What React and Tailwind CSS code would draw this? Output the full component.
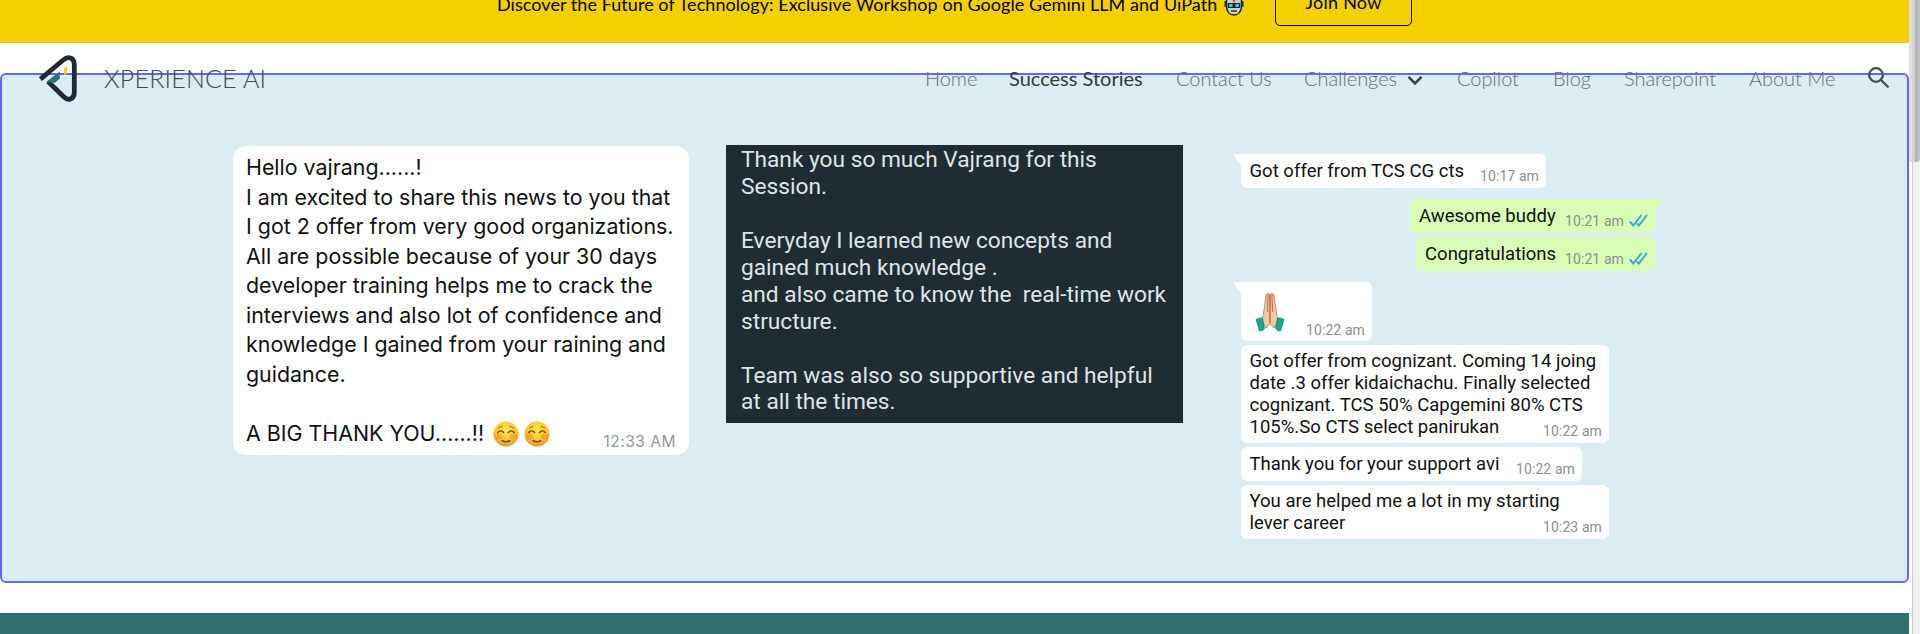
const NAV = [
  { label: 'Home', cell: 'w-[84px]' },
  { label: 'Success Stories', cell: 'w-[167px]', active: true },
  { label: 'Contact Us', cell: 'w-[128px]' },
  { label: 'Challenges', cell: 'w-[153px]', menu: true },
  { label: 'Copilot', cell: 'w-[96px]' },
  { label: 'Blog', cell: 'w-[71px]' },
  { label: 'Sharepoint', cell: 'w-[125px]' },
  { label: 'About Me', cell: 'w-[118px]' },
];

const LETTER = [
  'Hello vajrang......!',
  'I am excited to share this news to you that',
  'I got 2 offer from very good organizations.',
  'All are possible because of your 30 days',
  'developer training helps me to crack the',
  'interviews and also lot of confidence and',
  'knowledge I gained from your raining and',
  'guidance.',
];

const NOTE = [
  'Thank you so much Vajrang for this',
  'Session.',
  '',
  'Everyday I learned new concepts and',
  'gained much knowledge .',
  'and also came to know the  real-time work',
  'structure.',
  '',
  'Team was also so supportive and helpful',
  'at all the times.',
];

function Robot() {
  return (
    <svg className="ml-[7px] h-[24px] w-[20px] shrink-0" viewBox="0 0 20 24">
      <path d="M.5 9h2v6h-2zM17.500 9h2v6h-2z" fill="#333" />
      <path d="M2.5 4Q10 0 17.500 4v11q-1 8-7.500 8T2.500 15z" fill="#c9cdd0" stroke="#222" strokeWidth="1.500" />
      <path d="M8.200 7.500h3.600l-1.800 3z" fill="#e8302a" />
      <rect x="3.800" y="11" width="12.400" height="5" fill="#222" />
      <rect x="5" y="12" width="3.600" height="3" fill="#2cc3f2" />
      <rect x="11.400" y="12" width="3.600" height="3" fill="#2cc3f2" />
      <path d="M7 19h6" stroke="#333" strokeWidth="1.500" />
    </svg>
  );
}

function Logo() {
  return (
    <svg className="h-[50px] w-[42px]" viewBox="0 0 42 50" fill="none">
      <path d="M2.400 26.200L25.500 6.800C30 2.800 36.300 4.500 36.300 11.500V39.500C36.300 46.500 30 48 26 44L10 28.500" stroke="#1f2a36" strokeWidth="4.800" />
      <path d="M8.200 29L21.800 18.500V25.500L17 29.800z" fill="#31706f" />
      <path d="M26 15.500L29 13V20.500L26 22z" fill="#f5cf00" />
    </svg>
  );
}

function Smile() {
  return (
    <svg className="h-[26px] w-[26px]" viewBox="0 0 27 27" fill="none">
      <defs>
        <radialGradient id="face" cx=".5" cy=".35" r=".65">
          <stop offset="0" stopColor="#ffe94f" />
          <stop offset=".65" stopColor="#fdc52e" />
          <stop offset="1" stopColor="#ee8e1b" />
        </radialGradient>
      </defs>
      <circle cx="13.500" cy="13.500" r="13" fill="url(#face)" />
      <ellipse cx="5.800" cy="16" rx="4" ry="3" fill="#f8793a" opacity=".4" />
      <ellipse cx="21.200" cy="16" rx="4" ry="3" fill="#f8793a" opacity=".4" />
      <path d="M5 12q3-3.500 6 0M16 12q3-3.500 6 0M9.500 20.300q4 2.700 8 0" stroke="#70420d" strokeWidth="1.500" strokeLinecap="round" />
      <path d="M5.500 7.300q2-1.800 4-1.500M21.500 7.300q-2-1.800-4-1.500" stroke="#9a6412" strokeWidth="1" strokeLinecap="round" />
    </svg>
  );
}

function Hands() {
  return (
    <svg className="h-[40px] w-[30px]" viewBox="0 0 30 40">
      <path d="M14.800 2.500Q12.500.5 11 3L9.200 17Q8.500 24 6.500 27.500L11 36L15 31.500z" fill="#f3c9a5" stroke="#b87856" strokeWidth=".8" />
      <path d="M15.200 2.500Q17.500.5 19 3L20.800 17Q21.500 24 23.500 27.500L19 36L15 31.500z" fill="#f3c9a5" stroke="#b87856" strokeWidth=".8" />
      <path d="M13 4L12.500 20M17 4L17.500 20M15 3V31" stroke="#b06e50" strokeWidth="1" fill="none" />
      <path d="M12 1.500h2v5h-2.500zM16 1.500h2l.5 5H16z" fill="#d79874" />
      <path d="M1 27.500Q4 25.500 7.500 26L9.500 36.500Q7 39.500 4.500 39Z" fill="#16a990" stroke="#0d7d68" strokeWidth=".7" />
      <path d="M29 27.500Q26 25.500 22.500 26L20.500 36.500Q23 39.500 25.500 39Z" fill="#16a990" stroke="#0d7d68" strokeWidth=".7" />
    </svg>
  );
}

function Ticks() {
  return (
    <svg className="mb-[2px] ml-[5px] h-[13px] w-[19px]" viewBox="0 0 19 13" fill="none" stroke="#36a8dc" strokeWidth="1.900">
      <path d="M.8 7.500L4.300 11.500L12.500 1M7.800 9.500L9.800 11.500L18 1" />
    </svg>
  );
}

function Time({ children }) {
  return <span className="text-[14px] leading-[16px] tracking-[0.1px] text-[#8c8f91]">{children}</span>;
}

function Tail({ right }) {
  return right ? (
    <svg className="absolute top-0 -right-[8px] h-[12px] w-[16px]" viewBox="0 0 16 12"><path d="M0 0h15q1.500.5 0 2L8 11H0z" fill="#d9fdb5" /></svg>
  ) : (
    <svg className="absolute top-0 -left-[8px] h-[12px] w-[16px]" viewBox="0 0 16 12"><path d="M16 0H1q-1.500.5 0 2L8 11h8z" fill="#fff" /></svg>
  );
}

function Bubble({ className, lines, time, sent, tail }) {
  return (
    <div className={`relative flex items-end justify-between rounded-[6px] ${sent ? 'bg-[#d9fdb5] pr-[7px] pl-[9px]' : 'bg-white pr-[7px] pl-[8.500px]'} ${className}`}>
      {tail && <Tail right={sent} />}
      <div className={`min-w-0 self-start text-[18.500px] leading-[22px] tracking-[0.020px] whitespace-pre text-[#111] ${lines.length > 1 ? 'pt-[5px]' : 'pt-[6px]'}`}>
        {lines.map((l) => <div key={l}>{l}</div>)}
      </div>
      <div className="flex shrink-0 items-end pb-[4px]">
        <Time>{time}</Time>
        {sent && <Ticks />}
      </div>
    </div>
  );
}

export default function App() {
  return (
    <div className="relative flex h-[634px] w-[1920px] overflow-hidden bg-white font-['Lato',sans-serif]">
      <main className="flex w-[1909px] flex-col">
        <div className="flex h-[43px] items-start overflow-hidden bg-[#f5d000] pl-[497px] text-black">
          <div className="-mt-[8px] flex h-[24px] w-[778px] items-center text-[18px] leading-[24px] tracking-[0.055px] whitespace-nowrap">
            <span>Discover the Future of Technology: Exclusive Workshop on Google Gemini LLM and UiPath</span>
            <Robot />
          </div>
          <button className="-mt-[22px] h-[48px] w-[137px] rounded-[5px] border border-black text-[18px] leading-[24px] tracking-[0.250px]">Join Now</button>
        </div>

        <section className="mt-[30px] flex h-[510px] shrink-0 items-start rounded-[6px] border-2 border-[#6464ff] bg-[#dcecf3] pl-[231px]">
          <article className="mt-[71px] h-[309px] w-[456px] rounded-[13px] bg-white pt-[7px] pr-[13px] pl-[13px] font-['Inter',sans-serif] text-[21.400px] leading-[29.560px] whitespace-pre text-[#111]">
            {LETTER.map((l) => <div key={l}>{l}</div>)}
            <div className="h-[29.560px]" />
            <div className="flex h-[29px] items-center">
              <span>A BIG THANK YOU......!!</span>
              <span className="ml-[9px] flex gap-[5px]"><Smile /><Smile /></span>
              <span className="mt-[17px] ml-auto text-[15.500px] leading-[20px] tracking-[0.500px] text-[#98989c]">12:33 AM</span>
            </div>
          </article>

          <article className="mt-[70px] ml-[37px] h-[278px] w-[457px] bg-[#202c33] pt-[2px] pl-[15px] font-['Roboto',sans-serif] text-[22.700px] leading-[26.940px] whitespace-pre text-[#dfe4e7]">
            {NOTE.map((l, i) => <div key={i} className="h-[26.940px]">{l}</div>)}
          </article>

          <div className="mt-[79px] ml-[58px] flex w-[414px] flex-col items-start font-['Roboto',sans-serif]">
            <Bubble className="h-[34px] w-[305px]" lines={['Got offer from TCS CG cts']} time="10:17 am" tail />
            <Bubble className="mt-[11px] h-[34px] w-[245px] self-end" lines={['Awesome buddy']} time="10:21 am" sent tail />
            <Bubble className="mt-[4px] h-[34px] w-[239px] self-end" lines={['Congratulations']} time="10:21 am" sent />
            <div className="relative mt-[11px] flex h-[59px] w-[131px] items-end justify-between rounded-[6px] bg-white pr-[7px] pb-[3px] pl-[14px]">
              <Tail />
              <span className="mb-[6px]"><Hands /></span>
              <Time>10:22 am</Time>
            </div>
            <Bubble className="mt-[4px] h-[98px] w-[368px]" lines={['Got offer from cognizant. Coming 14 joing', 'date .3 offer kidaichachu. Finally selected', 'cognizant. TCS 50% Capgemini 80% CTS', '105%.So CTS select panirukan']} time="10:22 am" />
            <Bubble className="mt-[4px] h-[34px] w-[341px]" lines={['Thank you for your support avi']} time="10:22 am" />
            <Bubble className="mt-[4px] h-[54px] w-[368px]" lines={['You are helped me a lot in my starting', 'lever career']} time="10:23 am" />
          </div>
        </section>

        <div className="mt-[30px] h-[21px] shrink-0 bg-[#31706f]" />
      </main>

      <aside className="flex w-[11px] flex-col bg-[#f1f1f1]">
        <div className="flex h-[162px] overflow-hidden rounded-b-[4px]">
          <div className="w-[3px] bg-[#e0e0e0]" />
          <div className="w-[3px] bg-[#d2d2d2]" />
          <div className="w-[5px] bg-linear-to-r from-[#aaaaaa] to-[#c8c8c8]" />
        </div>
        <div className="flex flex-1">
          <div className="w-[3px] bg-white" />
          <div className="w-px bg-[#cfcfcf]" />
        </div>
      </aside>

      <header className="absolute top-[43px] left-0 flex h-[70px] w-[1909px] items-center pl-[38px]">
        <Logo />
        <span className="ml-[24px] w-[821px] pt-[2px] text-[25px] font-light tracking-[0.200px] text-[#444a4c]">XPERIENCE AI</span>
        <nav className="flex items-center text-[20px] leading-[24px] whitespace-nowrap">
          {NAV.map((n) => (
            <a key={n.label} className={`flex items-center ${n.cell} ${n.active ? 'font-normal text-[#343a3c]' : 'font-light tracking-[-0.050px] text-[#667073]'}`}>
              {n.label}
              {n.menu && (
                <svg className="mt-[5px] ml-[10px] h-[11px] w-[16px]" viewBox="0 0 16 11" fill="none" stroke="#3b4346" strokeWidth="2.600"><path d="M1.500 1.800L8 8.300L14.500 1.800" /></svg>
              )}
            </a>
          ))}
        </nav>
        <svg className="h-[24px] w-[24px]" viewBox="0 0 24 24" fill="none" stroke="#464c4f" strokeWidth="2.300">
          <circle cx="9" cy="9" r="6.800" /><path d="M14 14L21.500 21.500" />
        </svg>
      </header>
    </div>
  );
}
